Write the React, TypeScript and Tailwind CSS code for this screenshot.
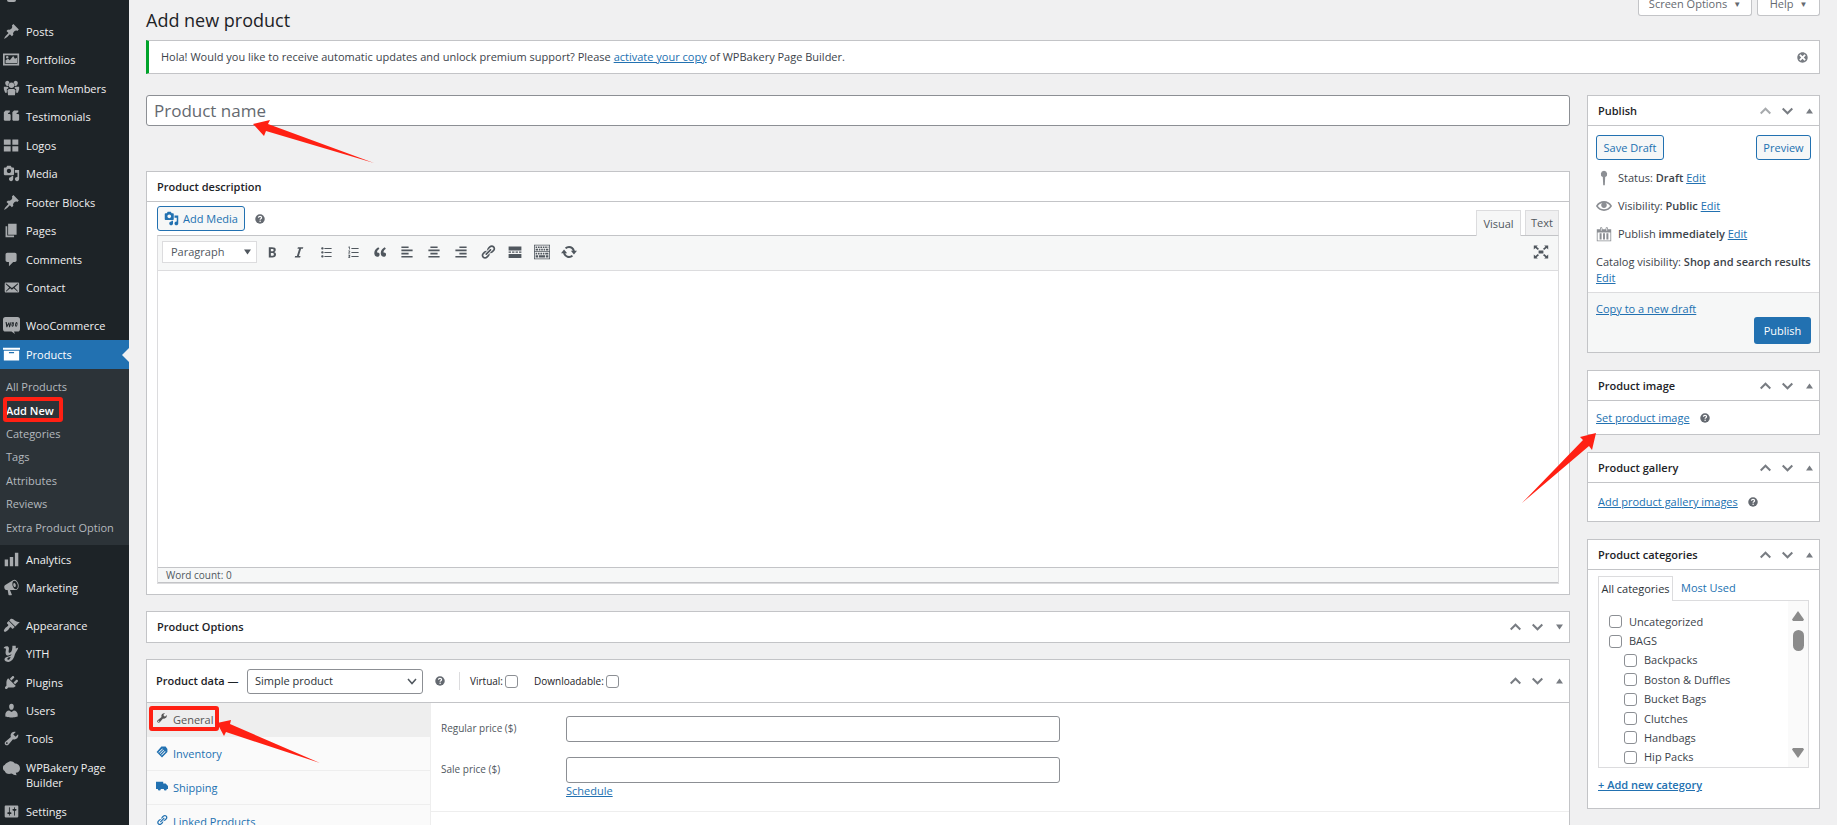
import React from 'react';

const paths = {
  pin: 'M10.44 3.02l1.82-1.82 6.36 6.35-1.83 1.82c-1.05-.68-2.48-.57-3.41.36l-.75.75c-.92.93-1.04 2.35-.35 3.41l-1.83 1.82-2.41-2.41-2.8 2.79c-.42.42-3.38 2.71-3.8 2.29s1.86-3.39 2.28-3.81l2.79-2.79L4.1 9.36l1.83-1.82c1.05.69 2.48.57 3.4-.36l.75-.75c.93-.92 1.05-2.35.36-3.41z',
  portfolio:
    'M0 3h19v14H0V3zm2 2v10h15V5H2zM3 14v-3l3-2 2 2 4-5 2 3 2.500-1V14H3zM5 5.800a1.500 1.500 0 1 1 0 3 1.500 1.500 0 0 1 0-3z',
  groups:
    'M8.03 4.46c-.29 1.28.55 3.46 1.97 3.46 1.41 0 2.25-2.18 1.96-3.46-.22-.98-1.08-1.63-1.96-1.63-.89 0-1.74.65-1.97 1.63zm-4.13.9c-.25 1.08.47 2.93 1.67 2.93s1.92-1.85 1.67-2.93c-.19-.83-.92-1.39-1.67-1.39s-1.48.56-1.67 1.39zm8.86 0c-.25 1.08.47 2.93 1.66 2.93 1.2 0 1.92-1.85 1.67-2.93-.19-.83-.92-1.39-1.67-1.39-.74 0-1.47.56-1.66 1.39zm-.59 11.43l1.25-4.3C14.2 10 12.71 8.47 10 8.47c-2.72 0-4.21 1.53-3.44 4.02l1.26 4.3C8.05 17.51 9 18 10 18c.98 0 1.94-.49 2.17-1.21zm-6.1-7.63c-.49.67-.96 1.83-.42 3.59l1.12 3.79c-.34.2-.77.31-1.2.31-.85 0-1.65-.41-1.85-1.03l-1.07-3.65c-.65-2.11.61-3.4 2.92-3.4.27 0 .54.02.79.06-.1.1-.2.22-.29.33zm8.35-.39c2.31 0 3.58 1.29 2.92 3.4l-1.07 3.65c-.2.62-1 1.03-1.85 1.03-.43 0-.86-.11-1.2-.31l1.11-3.77c.55-1.78.08-2.94-.42-3.61-.08-.11-.18-.23-.28-.33.25-.04.51-.06.79-.06z',
  crowd:
    'M5 1a2.800 2.800 0 0 1 2.600 2A3.600 3.600 0 0 0 6.500 7 2.800 2.800 0 1 1 5 1zm10 0a2.800 2.800 0 1 1-1.500 6 3.600 3.600 0 0 0-1.100-4A2.800 2.800 0 0 1 15 1zM10 3a3.200 3.200 0 1 1 0 6.400A3.200 3.200 0 0 1 10 3zM1 8h4.500l1.200 1.500L4.500 11v4H2.500L1 11zm18 0h-4.500l-1.200 1.500 2.200 1.500v4h2l1.500-4zM7 10.500h6l1.800 1.500-.8 6H6l-.8-6z',
  testimonial:
    'M1 5l2-2h5v2L6 6v1h2l1 1v6l-1 1H2l-1-1V5zm10 0l2-2h5v2l-2 1v1h2l1 1v6l-1 1h-6l-1-1V5z',
  quote:
    'M9.49 13.22c0-.74-.2-1.38-.61-1.9-.62-.78-1.83-.88-2.53-.72-.29-1.65 1.11-3.75 2.92-4.65L7.88 4c-2.73 1.3-5.42 4.28-4.96 8.05C3.21 14.43 4.59 16 6.54 16c.85 0 1.56-.25 2.12-.75s.83-1.18.83-2.03zm8.05 0c0-.74-.2-1.38-.61-1.9-.63-.78-1.83-.88-2.53-.72-.29-1.65 1.11-3.75 2.92-4.65L15.93 4c-2.73 1.3-5.41 4.28-4.95 8.05.29 2.38 1.66 3.95 3.61 3.95.85 0 1.56-.25 2.12-.75s.83-1.18.83-2.03z',
  grid: 'M1 3h8v6H1V3zm10 0h7v6h-7V3zM1 11h8v6H1v-6zm10 0h7v6h-7v-6z',
  media:
    'M13 11V4c0-.55-.45-1-1-1h-1.67L9 1H5L3.67 3H2c-.55 0-1 .45-1 1v7c0 .55.45 1 1 1h10c.55 0 1-.45 1-1zM7 4.5c1.38 0 2.5 1.12 2.5 2.5S8.38 9.5 7 9.5 4.5 8.38 4.5 7 5.62 4.5 7 4.5zM14 6h5v10.5c0 1.38-1.12 2.5-2.5 2.5S14 17.88 14 16.5s1.12-2.5 2.5-2.5c.17 0 .34.02.5.05V9h-3V6zm-4 8.05V13h2v3.5c0 1.38-1.12 2.5-2.5 2.5S7 17.88 7 16.5 8.12 14 9.5 14c.17 0 .34.02.5.05z',
  page: 'M6 15V2h10v13H6zm-1 1h8v2H3V5h2v11z',
  comment: 'M5 2h9c1.1 0 2 .9 2 2v7c0 1.1-.9 2-2 2h-2l-5 5v-5H5c-1.1 0-2-.9-2-2V4c0-1.1.9-2 2-2z',
  email:
    'M19 14.5v-9c0-.83-.67-1.5-1.5-1.5H3.49c-.83 0-1.5.67-1.5 1.5v9c0 .83.67 1.5 1.5 1.5H17.5c.83 0 1.5-.67 1.5-1.5zm-1.31-9.11c.33.33.15.67-.03.84L13.6 9.95l3.9 4.06c.12.14.2.36.06.51-.13.16-.43.15-.56.05l-4.37-3.73-2.14 1.95-2.13-1.95-4.37 3.73c-.13.1-.43.11-.56-.05-.14-.15-.06-.37.06-.51l3.9-4.06-4.06-3.72c-.18-.17-.36-.51-.03-.84s.67-.17.95.07l6.24 5.04 6.25-5.04c.28-.24.62-.4.95-.07z',
  woo: 'M3 0h14a3 3 0 0 1 3 3v11a3 3 0 0 1-3 3h-4l1 3-4-3H3a3 3 0 0 1-3-3V3a3 3 0 0 1 3-3zM3 6l1 6h1l1.500-3.500.7 3.500h1L10 6H9l-1 3.500L7.400 6.500H6.500L5 9.500 4.300 6H3zm8.800 0c-1.800 0-2.500 5.500-.6 5.500S13.500 6 11.800 6zm0 1.300c.5 0 .1 3-.4 3s-.2-3 .4-3zM16 6c-1.800 0-2.500 5.500-.6 5.500S17.700 6 16 6zm0 1.300c.5 0 .1 3-.4 3s-.2-3 .4-3z',
  archive: 'M20 2v2.500H0V2zM1 5.500h18V17H1V5.500zm12 3V7H7v1.500h6z',
  chart: 'M18 18V2h-4v16h4zm-6 0V7H8v11h4zm-6 0v-8H2v8h4z',
  megaphone:
    'M18.15 5.94c.46 1.62.38 3.22-.02 4.48-.42 1.28-1.26 2.18-2.3 2.48-.16.06-.26.06-.4.06-.06.02-.12.02-.18.02-.06.02-.14.02-.22.02h-6.8l2.22 5.5c.02.14-.06.26-.14.34-.08.1-.24.16-.34.16H6.95c-.1 0-.26-.06-.34-.16-.08-.08-.16-.2-.14-.34l-1-5.5H4.25l-.02-.02c-.5.06-1.08-.18-1.54-.62s-.88-1.08-1.06-1.88c-.24-.8-.2-1.56-.02-2.2.18-.62.58-1.08 1.06-1.3l.02-.02 9-5.4c.1-.06.18-.1.24-.16.06-.04.14-.08.24-.12.16-.08.28-.12.5-.18 1.04-.3 2.24.1 3.22.98s1.84 2.24 2.26 3.86zm-2.58 5.98h-.02c.4-.1.74-.34 1.04-.7.58-.7.86-1.76.86-3.04 0-.64-.1-1.3-.28-1.98-.34-1.36-1.02-2.5-1.78-3.24s-1.68-1.1-2.46-.88c-.82.22-1.4.96-1.7 2-.32 1.04-.28 2.36.06 3.72.38 1.36 1 2.5 1.8 3.24.78.74 1.62 1.1 2.48.88zm-2.54-7.08c.22-.04.42-.02.62.04.38.16.76.48 1.02 1s.42 1.2.42 1.78c0 .3-.04.56-.12.8-.18.48-.44.84-.86.94-.34.1-.8-.06-1.14-.4s-.64-.86-.78-1.5c-.18-.62-.12-1.24.02-1.72s.48-.84.82-.94z',
  brush:
    'M14.48 11.06L7.41 3.99l1.5-1.5c.5-.56 2.3-.47 3.51.32 1.21.8 1.43 1.28 2.91 2.1 1.18.64 2.45 1.26 4.45.85zm-.71.71L6.7 4.7 4.93 6.47c-.39.39-.39 1.02 0 1.41l1.06 1.06c.39.39.39 1.03 0 1.42-.6.6-1.43 1.11-2.21 1.69-.35.26-.7.53-1.01.84C1.43 14.23.4 16.08 1.4 17.07c.99 1 2.84-.03 4.18-1.36.31-.31.58-.66.85-1.02.57-.78 1.08-1.61 1.69-2.21.39-.39 1.02-.39 1.41 0l1.06 1.06c.39.39 1.02.39 1.41 0z',
  yith: 'M1 3c2-2 6-2 6 1 0 2-1 4 0 5 2 1 4-2 4-6V1h4v3l3-1c-1 4-3 5-4 8-1 5-4 9-8 9-3 0-5-2-4-4s4-2 6-3c1-.5 2-1 2-2-3 2-7 2-7-2 0-2 1-4 0-5-.6-.4-1.500 0-2 0zm8 11c-2 0-4 1-4 2.500S8 18 9 14z',
  plug: 'M13.11 4.36L9.87 7.6 8 5.73l3.24-3.24c.35-.34 1.05-.2 1.56.32.52.51.66 1.21.31 1.55zm-8 1.77l.91-1.12 9.01 9.01-1.19.84c-.71.71-2.63 1.16-3.82 1.16H6.14L4.9 17.26c-.59.59-1.54.59-2.12 0-.59-.58-.59-1.53 0-2.12l1.24-1.24v-3.88c0-1.13.4-3.19 1.09-3.89zm7.26 3.97l3.24-3.24c.34-.35 1.04-.21 1.55.31.52.51.66 1.21.31 1.55l-3.24 3.25z',
  user: 'M10 9.25c-2.27 0-2.73-3.44-2.73-3.44C7 4.02 7.82 2 9.97 2c2.16 0 2.98 2.02 2.71 3.81 0 0-.41 3.44-2.68 3.44zm0 2.57L12.72 10c2.39 0 4.52 2.33 4.52 4.53v2.49s-3.65 1.13-7.24 1.13c-3.65 0-7.24-1.13-7.24-1.13v-2.49c0-2.25 1.94-4.48 4.47-4.48z',
  wrench:
    'M16.68 9.77c-1.34 1.34-3.3 1.67-4.95.99l-5.41 6.52c-.99.99-2.59.99-3.58 0s-.99-2.59 0-3.57l6.52-5.42c-.68-1.65-.35-3.61.99-4.95 1.28-1.28 3.12-1.62 4.72-1.06l-2.89 2.89 2.82 2.82 2.86-2.87c.53 1.58.18 3.39-1.08 4.65zM3.81 16.21c.4.39 1.04.39 1.43 0 .4-.4.4-1.04 0-1.43-.39-.4-1.03-.4-1.43 0-.39.39-.39 1.03 0 1.43z',
  bakery: 'M7 2c3-1 5 0 7 2 3 0 6 2 6 6 0 3-2 5-5 5l1 3c-3 0-4-1-6-2-4 1-7 0-8-3-3-2-3-6 0-7 1-2 3-3 5-4z',
  sliders:
    'M18 16V4c0-.55-.45-1-1-1H3c-.55 0-1 .45-1 1v12c0 .55.45 1 1 1h14c.55 0 1-.45 1-1zM8 11h1c.55 0 1 .45 1 1s-.45 1-1 1H8v1.5c0 .28-.22.5-.5.5s-.5-.22-.5-.5V13H6c-.55 0-1-.45-1-1s.45-1 1-1h1V5.5c0-.28.22-.5.5-.5s.5.22.5.5V11zm5-2h-1c-.55 0-1-.45-1-1s.45-1 1-1h1V5.5c0-.28.22-.5.5-.5s.5.22.5.5V7h1c.55 0 1 .45 1 1s-.45 1-1 1h-1v5.5c0 .28-.22.5-.5.5s-.5-.22-.5-.5V9z',
  bold: 'M6 4v13h4.54c1.37 0 2.46-.33 3.26-1 .8-.66 1.2-1.58 1.2-2.77 0-.84-.17-1.51-.51-2.01s-.9-.85-1.67-1.03v-.09c.57-.1 1.02-.4 1.36-.9s.51-1.13.51-1.91c0-1.14-.39-1.98-1.17-2.5C12.75 4.26 11.5 4 9.78 4H6zm2.57 5.15V6.26h1.36c.73 0 1.27.11 1.61.32.34.22.51.58.51 1.07 0 .54-.16.92-.47 1.15s-.82.35-1.51.35h-1.5zm0 2.19h1.6c1.44 0 2.16.53 2.16 1.61 0 .6-.17 1.05-.51 1.34s-.86.43-1.57.43H8.57v-3.38z',
  italic: 'M14.78 6h-2.13l-2.8 9h2.12l-.62 2H4.6l.62-2h2.14l2.8-9H8.03l.62-2h6.75z',
  ul: 'M5.5 7C4.67 7 4 6.33 4 5.5 4 4.68 4.67 4 5.5 4 6.32 4 7 4.68 7 5.5 7 6.33 6.32 7 5.5 7zM8 5h9v1.200H8V5zm-2.5 7c-.83 0-1.5-.67-1.5-1.5C4 9.68 4.67 9 5.5 9c.82 0 1.5.68 1.5 1.5 0 .83-.68 1.5-1.5 1.5zM8 10h9v1.200H8V10zm-2.5 7c-.83 0-1.5-.67-1.5-1.5 0-.82.67-1.5 1.5-1.5.82 0 1.5.68 1.5 1.5 0 .83-.68 1.5-1.5 1.5zM8 15h9v1.200H8V15z',
  ol: 'M5 3h1v4H5V4.200L4 4.600V3.800zM4 8.300c1-.6 2.700-.3 2.500 1 0 .8-.8 1.300-1.300 1.800h1.400v.9H4v-.8c.5-.6 1.500-1.200 1.500-1.800 0-.5-.7-.4-1.300 0zM4 13.500h2.600v1l-.7.800c1.200.4.9 2.200-.7 2.200H4v-.9h1c.7 0 .6-.8 0-.8h-.6v-.6l.7-.9H4zM8 5h9v1.200H8V5zm0 5h9v1.200H8V10zm0 5h9v1.200H8V15z',
  left: 'M3 3h9v2H3V3zm0 4h14v2H3V7zm0 4h9v2H3v-2zm0 4h14v2H3v-2z',
  center: 'M5.500 3h9v2h-9V3zM3 7h14v2H3V7zm2.500 4h9v2h-9v-2zM3 15h14v2H3v-2z',
  right: 'M8 3h9v2H8V3zM3 7h14v2H3V7zm5 4h9v2H8v-2zm-5 4h14v2H3v-2z',
  link: 'M17.74 2.76c1.68 1.69 1.68 4.41 0 6.1l-1.53 1.52c-1.12 1.12-2.7 1.47-4.14 1.09l2.62-2.61.76-.77.76-.76c.84-.84.84-2.2 0-3.04-.84-.85-2.2-.85-3.04 0l-.77.76-3.38 3.38c-.37-1.44-.02-3.02 1.1-4.14l1.52-1.53c1.69-1.68 4.42-1.68 6.1 0zM8.59 13.43l5.34-5.34c.42-.42.42-1.1 0-1.52-.44-.43-1.13-.39-1.53 0l-5.33 5.34c-.42.42-.42 1.1 0 1.52.44.43 1.13.39 1.52 0zm-.76 2.29l4.14-4.15c.38 1.44.03 3.02-1.09 4.14l-1.52 1.53c-1.69 1.68-4.41 1.68-6.1 0-1.68-1.68-1.68-4.42 0-6.1l1.53-1.52c1.12-1.12 2.7-1.47 4.14-1.1l-4.14 4.15c-.85.84-.85 2.2 0 3.05.84.84 2.2.84 3.04 0z',
  more: 'M2 3h16v5H2V3zm0 6.500h3v1.500H2V9.500zm4.300 0h3V11h-3V9.500zm4.400 0h3V11h-3V9.500zm4.300 0h3V11h-3V9.500zM2 12.500h16v5H2v-5z',
  kitchen:
    'M0 1h20v18H0V1zm1 1v7h18V2H1zm0 8v8h18v-8H1zm1-7h2v2H2V3zm3 0h2v2H5V3zm3 0h2v2H8V3zm3 0h2v2h-2V3zm3 0h2v2h-2V3zm3 0h1v2h-1V3zM2 6h3v2H2V6zm4 0h2v2H6V6zm3 0h2v2H9V6zm3 0h2v2h-2V6zm3 0h3v2h-3V6zM2 11h2v2H2v-2zm3 0h2v2H5v-2zm3 0h2v2H8v-2zm3 0h2v2h-2v-2zm3 0h4v2h-4v-2zM2 14h3v3H2v-3zm4 0h8v3H6v-3zm9 0h3v3h-3v-3z',
  refresh:
    'M10 2.500c3.600 0 6.600 2.500 7.300 6H20l-3.800 4.500-3.900-4.500h2.400c-.6-2-2.500-3.500-4.700-3.500-1.300 0-2.500.5-3.400 1.400L4.800 4.600A7.500 7.500 0 0 1 10 2.500zM3.800 7l3.900 4.500H5.300c.6 2 2.500 3.500 4.700 3.500 1.300 0 2.500-.5 3.400-1.400l1.800 1.800A7.500 7.500 0 0 1 2.700 11.500H0z',
  expand:
    'M1 2h5L4.500 3.500 7.500 6 6 7.500 3 5 1 7V2zm13 0h5v5l-2-2-3 2.500L12.500 6l3-2.500zM6 12.500L7.500 14l-3 2.500L6 18H1v-5l2 2zm8 0l3 2.500 2-2v5h-5l1.500-1.500-3-2.500zM7 8h6v4H7z',
  key: 'M10 1a4 4 0 0 1 1.500 7.700L11 19H9L8.500 8.700A4 4 0 0 1 10 1z',
  eye: 'M19.7 9.4C17.7 6 14 3.9 10 3.9S2.3 6 .3 9.4L0 10l.3.6c2 3.4 5.7 5.5 9.7 5.5s7.7-2.1 9.7-5.5l.3-.6-.3-.6zM10 14.1c-3.1 0-6-1.6-7.7-4.1C3.6 8 5.7 6.6 8 6.1c-.9.6-1.5 1.7-1.5 2.9 0 1.9 1.6 3.5 3.5 3.5s3.5-1.6 3.5-3.5c0-1.2-.6-2.3-1.5-2.9 2.3.5 4.4 1.9 5.7 3.9-1.7 2.5-4.6 4.1-7.7 4.1z',
  calendar:
    'M15 4h4v15H1V4h4V3c0-.83.67-1.5 1.5-1.5S8 2.17 8 3v1h4V3c0-.83.67-1.5 1.5-1.5S15 2.17 15 3v1zM6 3v2.5c0 .28.22.5.5.5s.5-.22.5-.5V3c0-.28-.22-.5-.5-.5S6 2.72 6 3zm7 0v2.5c0 .28.22.5.5.5s.5-.22.5-.5V3c0-.28-.22-.5-.5-.5s-.5.22-.5.5zm5 15V8H2v10h16zM7 17V9H4.500v8H7zm4.200 0V9H8.800v8h2.400zm4.300 0V9H13v8h2.500z',
  dismiss:
    'M10 2c4.42 0 8 3.58 8 8s-3.58 8-8 8-8-3.58-8-8 3.58-8 8-8zm5 11l-3-3 3-3-2-2-3 3-3-3-2 2 3 3-3 3 2 2 3-3 3 3z',
  tag: 'M9 1h7l3 4v5l-9 9L1 10zM10.500 4L4 10.300l.9.9L11.400 5zm2.200 2.200l-6.400 6.400.9.9 6.400-6.400zm2.300 2.300l-6.400 6.400.9.9L15.900 9.400z',
  truck: 'M0 3h12v3h4l4 4v5h-2a2.500 2.500 0 0 1-5 0H8a2.500 2.500 0 0 1-5 0H0V3z',
};

type IconName = keyof typeof paths;

const Icon: React.FC<{ name: IconName; className?: string }> = ({ name, className = 'size-4' }) => (
  <svg viewBox="0 0 20 20" fill="currentColor" fillRule="evenodd" aria-hidden="true" className={`shrink-0 ${className}`}>
    <path d={paths[name]} />
  </svg>
);

const HelpTip: React.FC = () => (
  <svg viewBox="0 0 20 20" className="size-[10px] shrink-0 text-[#646970]" role="img" aria-label="Help">
    <circle cx="10" cy="10" r="9.500" fill="currentColor" />
    <path d="M6.800 7.600C7 5.500 8.300 4.600 10 4.600c1.900 0 3.200 1 3.200 2.700 0 2.200-3 2.200-3 4.400" fill="none" stroke="#fff" strokeWidth="2.400" />
    <circle cx="10.200" cy="14.600" r="1.500" fill="#fff" />
  </svg>
);

interface MenuItem {
  icon: IconName;
  label: string;
}

const contentMenu: MenuItem[] = [
  { icon: 'pin', label: 'Posts' },
  { icon: 'portfolio', label: 'Portfolios' },
  { icon: 'crowd', label: 'Team Members' },
  { icon: 'testimonial', label: 'Testimonials' },
  { icon: 'grid', label: 'Logos' },
  { icon: 'media', label: 'Media' },
  { icon: 'pin', label: 'Footer Blocks' },
  { icon: 'page', label: 'Pages' },
  { icon: 'comment', label: 'Comments' },
  { icon: 'email', label: 'Contact' },
];

const reportMenu: MenuItem[] = [
  { icon: 'chart', label: 'Analytics' },
  { icon: 'megaphone', label: 'Marketing' },
];

const systemMenu: MenuItem[] = [
  { icon: 'brush', label: 'Appearance' },
  { icon: 'yith', label: 'YITH' },
  { icon: 'plug', label: 'Plugins' },
  { icon: 'user', label: 'Users' },
  { icon: 'wrench', label: 'Tools' },
];

const productMenu = ['All Products', 'Add New', 'Categories', 'Tags', 'Attributes', 'Reviews', 'Extra Product Option'];

const MenuLink: React.FC<MenuItem> = ({ icon, label }) => (
  <a href="#" className="flex h-full items-center gap-[6px] pl-[3px] text-[#f0f0f1]">
    <Icon name={icon} className="size-[17px] text-[#a7aaad]" />
    <span>{label}</span>
  </a>
);

const MenuGroup: React.FC<{ items: MenuItem[]; className: string }> = ({ items, className }) => (
  <ul className={`flex flex-col ${className}`}>
    {items.map((item) => (
      <li key={item.label} className="flex-1">
        <MenuLink {...item} />
      </li>
    ))}
  </ul>
);

const Sidebar: React.FC = () => (
  <nav className="w-[129px] shrink-0 overflow-hidden bg-[#1d2327] text-[11px] leading-[15px] font-medium">
    <div className="h-[17px] overflow-hidden pl-[7px]">
      <div className="h-[2px] w-[9px] rounded-b-full bg-[#a7aaad]" />
    </div>
    <MenuGroup items={contentMenu} className="h-[285px]" />
    <div className="mt-[9px] h-[29px]">
      <MenuLink icon="woo" label="WooCommerce" />
    </div>
    <a href="#" className="relative flex h-[29px] items-center gap-[6px] bg-[#2271b1] pl-[3px] text-white">
      <Icon name="archive" className="size-[17px]" />
      Products
      <span className="absolute top-2 right-0 border-y-[7px] border-r-[7px] border-y-transparent border-r-[#f0f0f1]" />
    </a>
    <ul className="flex h-[176px] flex-col bg-[#2c3338] pt-[6px] pb-[6px] font-normal text-[#b4b9be]">
      {productMenu.map((label) => (
        <li key={label} className="relative flex flex-1 items-center pl-[6px]">
          <a href="#" className={label === 'Add New' ? 'font-semibold text-white' : ''}>
            {label}
          </a>
          {label === 'Add New' && (
            <span className="absolute top-[-1px] left-[3px] h-[25px] w-[60px] rounded-[3px] border-4 border-[#ff2013]" />
          )}
        </li>
      ))}
    </ul>
    <MenuGroup items={reportMenu} className="h-[57px]" />
    <MenuGroup items={systemMenu} className="mt-[9px] h-[142px]" />
    <a href="#" className="flex h-[44px] gap-[6px] pt-[7px] pl-[3px] text-[#f0f0f1]">
      <Icon name="bakery" className="size-[17px] text-[#a7aaad]" />
      <span>WPBakery Page Builder</span>
    </a>
    <div className="h-7">
      <MenuLink icon="sliders" label="Settings" />
    </div>
  </nav>
);

const Handles: React.FC<{ open?: boolean; first?: boolean }> = ({ open = true, first = false }) => (
  <div className="flex items-center gap-[11px] pr-[6px] text-[#787c82]">
    <button aria-label="Move up" className={first ? 'text-[#a7aaad]' : ''}>
      <svg viewBox="0 0 11 8" className="h-2 w-[11px]" fill="none" stroke="currentColor" strokeWidth="2">
        <path d="M.7 6.500L5.500 1.700l4.800 4.800" />
      </svg>
    </button>
    <button aria-label="Move down">
      <svg viewBox="0 0 11 8" className="h-2 w-[11px]" fill="none" stroke="currentColor" strokeWidth="2">
        <path d="M.7 1.500l4.800 4.800 4.800-4.800" />
      </svg>
    </button>
    <button aria-label="Toggle panel" className="pl-[2px]">
      <svg viewBox="0 0 7 6" className="h-[6px] w-[7px]" fill="currentColor">
        <path d={open ? 'M3.500.5L7 5.500H0z' : 'M0 .5h7L3.500 5.500z'} />
      </svg>
    </button>
  </div>
);

interface PanelProps {
  title: string;
  open?: boolean;
  first?: boolean;
  handles?: boolean;
  children?: React.ReactNode;
}

const Panel: React.FC<PanelProps> = ({ title, open = true, first, handles = true, children }) => (
  <section className="border border-[#c3c4c7] bg-white">
    <header className={`flex h-[30px] items-center justify-between pl-[10px] ${open ? 'border-b border-[#c3c4c7]' : ''}`}>
      <h2 className="font-semibold text-[#1d2327]">{title}</h2>
      {handles && <Handles open={open} first={first} />}
    </header>
    {children}
  </section>
);

const TextLink: React.FC<{ children: React.ReactNode; className?: string }> = ({ children, className = '' }) => (
  <a href="#" className={`text-[#2271b1] underline ${className}`}>
    {children}
  </a>
);

const Checkbox: React.FC<{ id: string }> = ({ id }) => (
  <input id={id} type="checkbox" className="size-[13px] shrink-0 appearance-none rounded-[3px] border border-[#8c8f94] bg-white" />
);

const outlineButton = 'h-[25px] rounded-[3px] border border-[#2271b1] bg-[#f6f7f7] text-[#2271b1]';

const toolbarIcons: { icon: IconName; label: string }[] = [
  { icon: 'bold', label: 'Bold' },
  { icon: 'italic', label: 'Italic' },
  { icon: 'ul', label: 'Bulleted list' },
  { icon: 'ol', label: 'Numbered list' },
  { icon: 'quote', label: 'Blockquote' },
  { icon: 'left', label: 'Align left' },
  { icon: 'center', label: 'Align center' },
  { icon: 'right', label: 'Align right' },
  { icon: 'link', label: 'Insert link' },
  { icon: 'more', label: 'Insert Read More tag' },
  { icon: 'kitchen', label: 'Toolbar Toggle' },
  { icon: 'refresh', label: 'Refresh' },
];

const Editor: React.FC = () => (
  <Panel title="Product description" handles={false}>
    <div className="px-[10px] pt-1 pb-[10px]">
      <div className="flex h-[29px] items-start justify-between">
        <div className="flex items-center gap-[10px]">
          <button className={`flex w-[88px] items-center justify-center gap-1 ${outlineButton}`}>
            <Icon name="media" className="size-[15px]" />
            Add Media
          </button>
          <HelpTip />
        </div>
        <div className="z-10 flex gap-1 self-end text-[#50575e]">
          <button className="mb-[-1px] h-[26px] w-[45px] border border-b-0 border-[#dcdcde] bg-[#f6f7f7]">Visual</button>
          <button className="h-[25px] w-[34px] border border-b-0 border-[#dcdcde] bg-[#f0f0f1]">Text</button>
        </div>
      </div>
      <div className="border border-[#dcdcde] border-t-[#c3c4c7]">
        <div className="flex h-[35px] items-center border-b border-[#dcdcde] bg-[#f6f7f7] pr-[9px] pb-[2px] pl-1 text-[#50575e]">
          <button className="mr-[7px] flex h-[22px] w-[95px] items-center justify-between border border-[#dcdcde] bg-white pr-[5px] pl-2">
            Paragraph
            <svg viewBox="0 0 7 6" className="h-[6px] w-[7px]" fill="currentColor">
              <path d="M0 .5h7L3.500 5.500z" />
            </svg>
          </button>
          <div className="flex gap-[11px]">
            {toolbarIcons.map(({ icon, label }) => (
              <button key={icon} aria-label={label}>
                <Icon name={icon} />
              </button>
            ))}
          </div>
          <button aria-label="Fullscreen" className="ml-auto">
            <Icon name="expand" />
          </button>
        </div>
        <textarea aria-label="Product description" className="block h-[296px] w-full resize-none bg-white" />
        <div className="flex h-4 items-center border-t border-b border-[#c3c4c7] bg-[#f6f7f7] pl-2 text-[10px] text-[#50575e]">
          Word count: 0
        </div>
      </div>
    </div>
  </Panel>
);

const dataTabs: MenuItem[] = [
  { icon: 'wrench', label: 'General' },
  { icon: 'tag', label: 'Inventory' },
  { icon: 'truck', label: 'Shipping' },
  { icon: 'link', label: 'Linked Products' },
];

const ProductData: React.FC = () => (
  <section className="border border-[#c3c4c7] bg-white">
    <header className="flex h-[43px] items-center justify-between border-b border-[#c3c4c7] pl-[9px]">
      <div className="flex items-center text-[#1d2327]">
        <label htmlFor="type" className="w-[91px] font-semibold">
          Product data —
        </label>
        <div className="relative">
          <select
            id="type"
            className="block h-[25px] w-[176px] appearance-none rounded-[3px] border border-[#8c8f94] bg-white pl-[7px] font-medium text-[#2c3338]"
          >
            <option>Simple product</option>
          </select>
          <svg viewBox="0 0 10 7" className="pointer-events-none absolute top-[9px] right-[6px] h-[7px] w-[10px]" fill="none" stroke="#50575e" strokeWidth="1.500">
            <path d="M1 1l4 4.500L9 1" />
          </svg>
        </div>
        <div className="mr-[14px] ml-3">
          <HelpTip />
        </div>
        <div className="flex h-[18px] items-center gap-[2px] border-l border-[#dcdcde] pl-[10px] text-[10px] font-medium">
          <label htmlFor="virtual">Virtual:</label>
          <Checkbox id="virtual" />
          <label htmlFor="downloadable" className="ml-[14px]">
            Downloadable:
          </label>
          <Checkbox id="downloadable" />
        </div>
      </div>
      <Handles />
    </header>
    <div className="flex">
      <ul className="h-[180px] w-[284px] shrink-0 border-r border-[#eee] bg-[#fafafa]">
        {dataTabs.map(({ icon, label }, i) => (
          <li key={label} className={`relative h-[34px] border-b border-[#eee] ${i === 0 ? 'bg-[#eee]' : ''}`}>
            <a href="#" className={`flex h-full items-center gap-[5px] pl-[9px] ${i === 0 ? 'text-[#555]' : 'text-[#2271b1]'}`}>
              <Icon name={icon} className="mb-1 size-3" />
              {label}
            </a>
            {i === 0 && (
              <>
                <span className="absolute top-[3px] left-[2px] h-[25px] w-[70px] rounded-[3px] border-4 border-[#ff2013]" />
                <svg viewBox="0 0 104 44" className="absolute top-[17px] left-[70px] h-11 w-[104px]" fill="#ff2013">
                  <path d="M0 3L14 0l-1 4 L103 43 9 12 7 16z" />
                </svg>
              </>
            )}
          </li>
        ))}
      </ul>
      <div className="flex-1 text-[10px] text-[#50575e]">
        <div className="h-[109px] border-b border-[#eee] pt-[13px] pl-[10px]">
          <div className="flex items-start">
            <label htmlFor="regular" className="w-[125px] pt-1">
              Regular price ($)
            </label>
            <input id="regular" type="text" className="h-[26px] w-1/2 max-w-[494px] rounded-[3px] border border-[#8c8f94] bg-white px-2" />
          </div>
          <div className="mt-[15px] flex items-start">
            <label htmlFor="sale" className="w-[125px] pt-1">
              Sale price ($)
            </label>
            <input id="sale" type="text" className="h-[26px] w-1/2 max-w-[494px] rounded-[3px] border border-[#8c8f94] bg-white px-2" />
          </div>
          <TextLink className="ml-[125px] text-[11px]">Schedule</TextLink>
        </div>
      </div>
    </div>
  </section>
);

const categories = [
  { label: 'Uncategorized', child: false },
  { label: 'BAGS', child: false },
  { label: 'Backpacks', child: true },
  { label: 'Boston & Duffles', child: true },
  { label: 'Bucket Bags', child: true },
  { label: 'Clutches', child: true },
  { label: 'Handbags', child: true },
  { label: 'Hip Packs', child: true },
];

const publishRows: { icon: IconName; label: string; value: string }[] = [
  { icon: 'key', label: 'Status:', value: 'Draft' },
  { icon: 'eye', label: 'Visibility:', value: 'Public' },
  { icon: 'calendar', label: 'Publish', value: 'immediately' },
];

const PublishPanel: React.FC = () => (
  <Panel title="Publish" first>
    <div className="px-2 pt-[9px]">
      <div className="flex justify-between">
        <button className={`w-[68px] ${outlineButton}`}>Save Draft</button>
        <button className={`w-[55px] ${outlineButton}`}>Preview</button>
      </div>
      <ul className="mt-1">
        {publishRows.map(({ icon, label, value }) => (
          <li key={label} className="flex h-[28px] items-center text-[#3c434a]">
            <Icon name={icon} className="mr-[6px] size-4 text-[#8c8f94]" />
            <span>
              {label} <b className="font-semibold">{value}</b> <TextLink>Edit</TextLink>
            </span>
          </li>
        ))}
      </ul>
      <p className="pt-[6px] pb-[6px] leading-4 text-[#3c434a]">
        Catalog visibility: <b className="font-semibold">Shop and search results</b> <TextLink>Edit</TextLink>
      </p>
    </div>
    <div className="flex h-[60px] flex-col border-t border-[#dcdcde] bg-[#f6f7f7] px-2 pt-2">
      <TextLink className="h-4 self-start">Copy to a new draft</TextLink>
      <button className="h-[27px] w-[57px] self-end rounded-[3px] bg-[#2271b1] text-white">Publish</button>
    </div>
  </Panel>
);

const CategoriesPanel: React.FC = () => (
  <Panel title="Product categories">
    <div className="px-[10px] pt-[6px] pb-[15px]">
      <div className="flex h-6">
        <button className="z-10 mb-[-1px] w-[75px] border border-b-0 border-[#dcdcde] bg-white text-[#2c3338]">All categories</button>
        <button className="px-2 text-[#2271b1]">Most Used</button>
      </div>
      <div className="flex h-[168px] border border-[#dcdcde]">
        <ul className="flex flex-1 flex-col pt-[11px] pl-[10px] text-[#3c434a]">
          {categories.map(({ label, child }) => (
            <li key={label} className={`flex flex-1 items-center gap-[7px] ${child ? 'pl-[15px]' : ''}`}>
              <Checkbox id={label} />
              <label htmlFor={label}>{label}</label>
            </li>
          ))}
        </ul>
        <div className="flex w-5 flex-col items-center bg-[#fafafa] pt-[10px] pb-[9px] text-[#8b8b8b]">
          <svg viewBox="0 0 12 10" className="h-[10px] w-3" fill="currentColor">
            <path d="M6 0l6 8.500-1 1.500H1L0 8.500z" />
          </svg>
          <div className="mt-[9px] h-[21px] w-[11px] rounded-full bg-current" />
          <svg viewBox="0 0 12 10" className="mt-auto h-[10px] w-3" fill="currentColor">
            <path d="M6 10L0 1.500 1 0h10l1 1.500z" />
          </svg>
        </div>
      </div>
      <TextLink className="mt-[9px] block font-semibold">+ Add new category</TextLink>
    </div>
  </Panel>
);

const App: React.FC = () => (
  <div className="flex h-screen overflow-hidden bg-[#f0f0f1] font-['Open_Sans',sans-serif] text-[11px] leading-4 text-[#3c434a]">
    <Sidebar />
    <div className="flex-1 px-[17px]">
      <div className="flex h-10 items-start justify-between">
        <h1 className="pt-2 text-lg leading-6 text-[#1d2327]">Add new product</h1>
        <div className="flex gap-[5px] text-[#646970]">
          <button className="flex h-4 w-[114px] items-center justify-center gap-[6px] rounded-b-[3px] border border-t-0 border-[#c3c4c7] bg-white pb-2 leading-3">
            Screen Options <span className="text-[8px]">▼</span>
          </button>
          <button className="flex h-4 w-[63px] items-center justify-center gap-[6px] rounded-b-[3px] border border-t-0 border-[#c3c4c7] bg-white pb-2 leading-3">
            Help <span className="text-[8px]">▼</span>
          </button>
        </div>
      </div>
      <div className="flex h-[34px] items-center justify-between border border-l-[3px] border-[#c3c4c7] border-l-[#00a32a] bg-white pr-[10px] pl-3">
        <p>
          Hola! Would you like to receive automatic updates and unlock premium support? Please{' '}
          <TextLink>activate your copy</TextLink> of WPBakery Page Builder.
        </p>
        <button aria-label="Dismiss" className="text-[#787c82]">
          <Icon name="dismiss" className="size-[13px]" />
        </button>
      </div>
      <div className="mt-[21px] flex items-start gap-[17px]">
        <main className="min-w-0 flex-1">
          <div className="relative h-[76px]">
            <input
              aria-label="Product name"
              placeholder="Product name"
              className="h-[31px] w-full rounded-[3px] border border-[#8c8f94] bg-white px-[7px] text-[17px] placeholder:text-[#646970]"
            />
            <svg viewBox="0 0 122 44" className="absolute top-[25px] left-[107px] h-11 w-[122px]" fill="#ff2013">
              <path d="M0 4L17 0l-2 4L121 43 13 11l-2 5z" />
            </svg>
          </div>
          <div className="flex flex-col gap-4">
            <Editor />
            <Panel title="Product Options" open={false} />
            <ProductData />
          </div>
        </main>
        <aside className="flex w-[233px] shrink-0 flex-col gap-[17px]">
          <PublishPanel />
          <div className="relative">
            <Panel title="Product image">
              <div className="flex h-[33px] items-center gap-[10px] px-2">
                <TextLink>Set product image</TextLink>
                <HelpTip />
              </div>
            </Panel>
            <svg viewBox="0 0 75 71" className="absolute top-[63px] left-[-65px] z-10 h-[71px] w-[75px]" fill="#ff2013">
              <path d="M74 0L58 4l3 3L0 70 67 13l3 4z" />
            </svg>
          </div>
          <Panel title="Product gallery">
            <div className="flex h-[38px] items-center gap-[10px] px-[10px]">
              <TextLink>Add product gallery images</TextLink>
              <HelpTip />
            </div>
          </Panel>
          <CategoriesPanel />
        </aside>
      </div>
    </div>
  </div>
);

export default App;
